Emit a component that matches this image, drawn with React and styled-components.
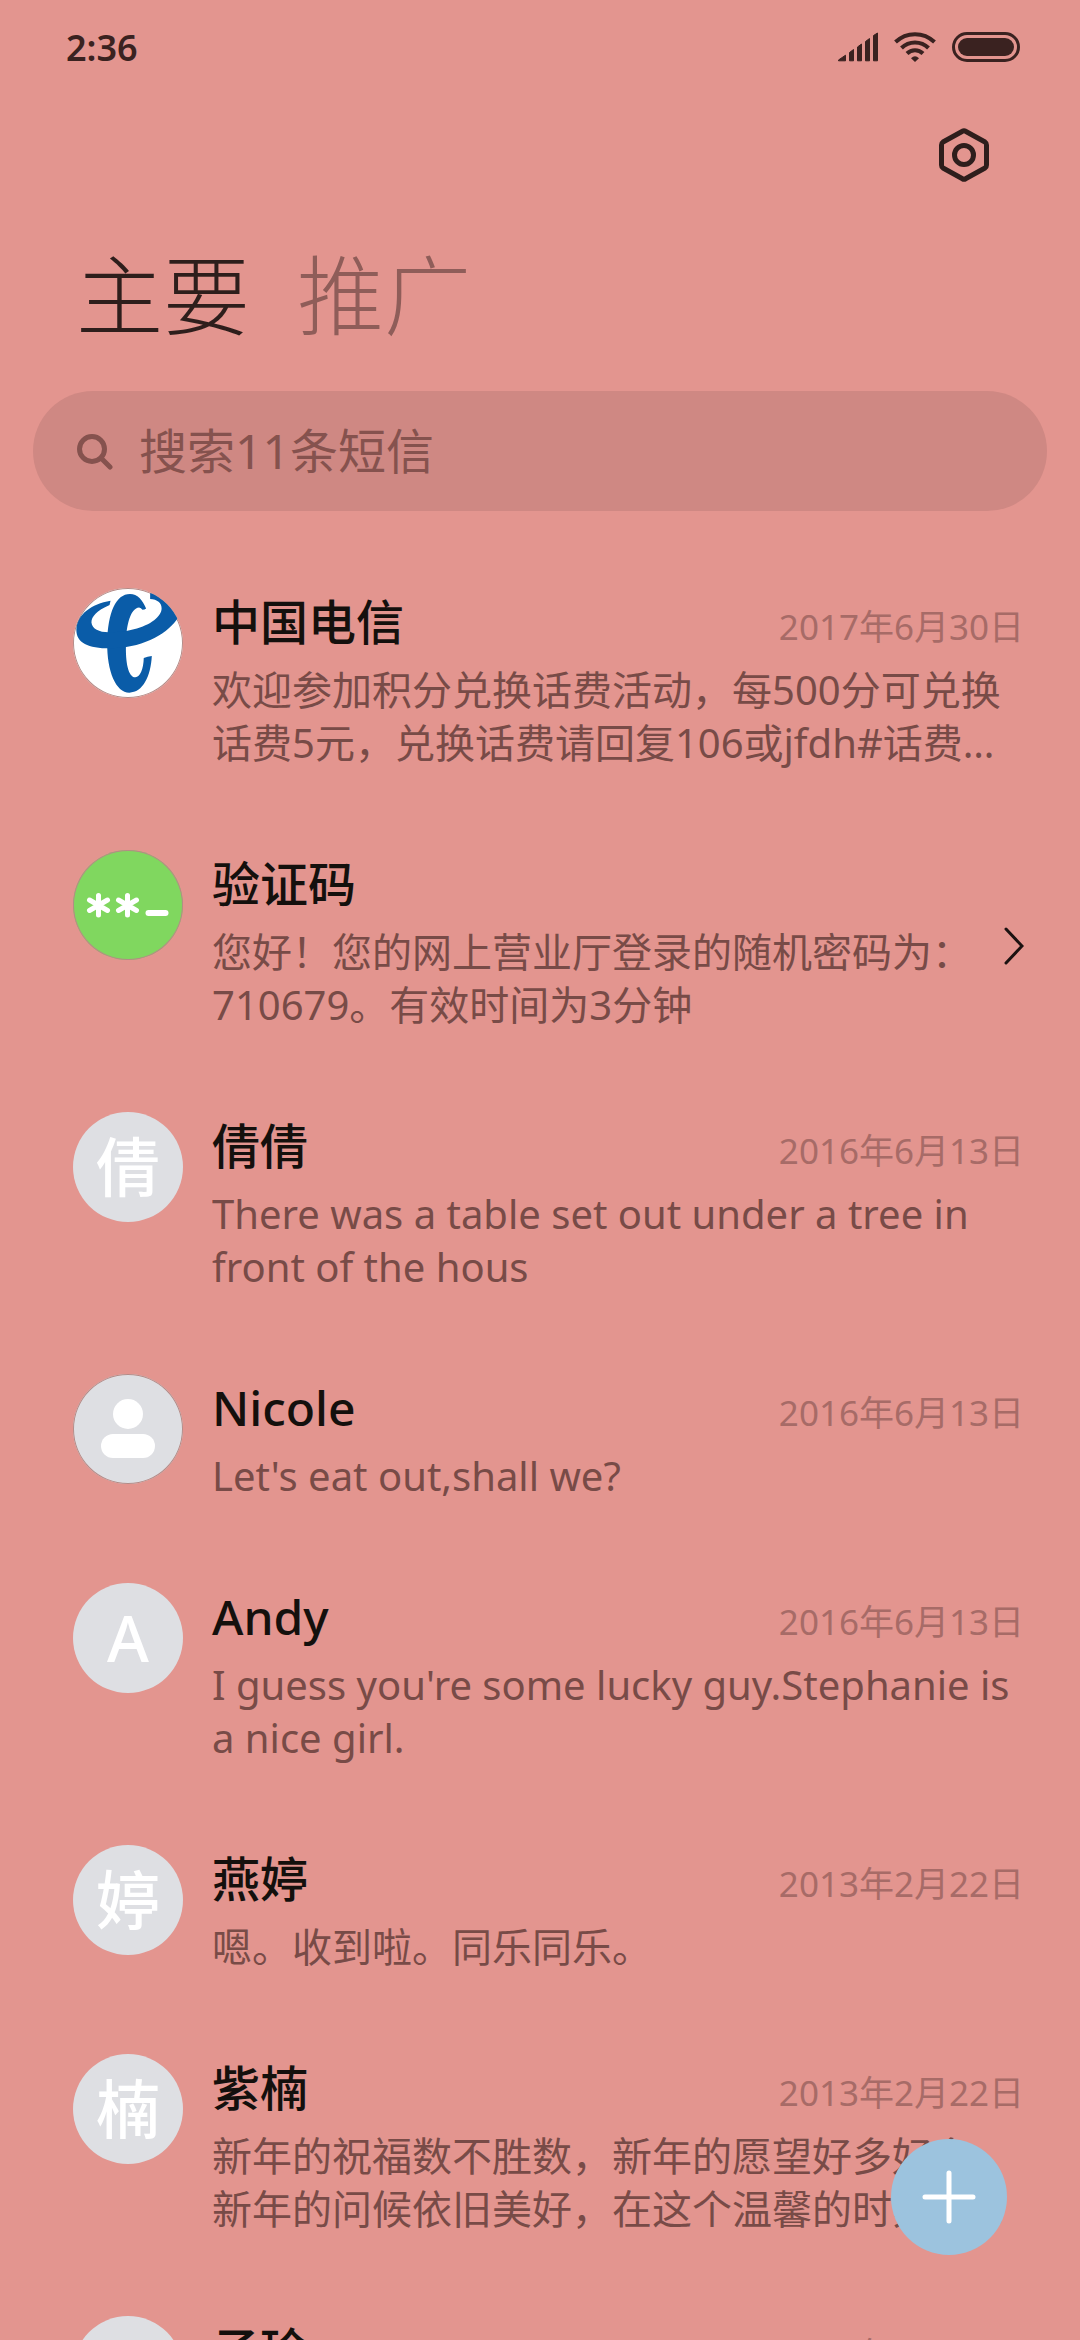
import styled, { createGlobalStyle } from "styled-components";

const GlobalStyle = createGlobalStyle`
  * {
    box-sizing: border-box;
  }

  body {
    margin: 0;
    background-color: #e3958f;
    font-family: "Noto Sans", "Noto Sans CJK SC", sans-serif;
    color: #14100d;
  }

  button,
  input {
    font: inherit;
    color: inherit;
    border: none;
    padding: 0;
    background: none;
  }
`;

const Screen = styled.div`
  display: flex;
  flex-direction: column;
  height: 100vh;
  overflow: hidden;
`;

const StatusBar = styled.div`
  display: flex;
  align-items: center;
  justify-content: space-between;
  height: 94px;
  padding: 0 60px 0 66px;
  color: #3a2220;
`;

const Clock = styled.span`
  font-size: 36px;
  font-weight: 600;
`;

const StatusIcons = styled.div`
  display: flex;
  align-items: center;
  gap: 16px;
`;

const Toolbar = styled.div`
  display: flex;
  justify-content: flex-end;
  padding: 30px 87px 0;
`;

const IconButton = styled.button`
  display: flex;
  padding: 4px;
`;

const Tabs = styled.nav`
  display: flex;
  gap: 47px;
  padding: 49px 76px 36px;
`;

const Tab = styled.button`
  font-size: 87px;
  font-weight: 300;
  line-height: 120px;
  color: ${(props) => (props.$active ? "#2e1e1c" : "#8f5d59")};
`;

const SearchBox = styled.label`
  display: flex;
  align-items: center;
  flex-shrink: 0;
  gap: 26px;
  height: 120px;
  margin: 0 33px;
  padding: 0 42px;
  border-radius: 60px;
  background-color: #cf8883;
  color: #85524e;
`;

const SearchInput = styled.input`
  flex: 1;
  min-width: 0;
  font-size: 48px;
  line-height: 72px;
  outline: none;

  &::placeholder {
    color: #85524e;
    opacity: 1;
  }
`;

const List = styled.ul`
  display: flex;
  flex-direction: column;
  flex: 1;
  gap: 81px;
  min-height: 0;
  margin: 0;
  padding: 77px 56px 0 73px;
  overflow-y: auto;
  list-style: none;
  scrollbar-width: none;
`;

const Row = styled.li`
  display: flex;
  align-items: flex-start;
  gap: 29px;
`;

const Avatar = styled.div`
  display: flex;
  align-items: center;
  justify-content: center;
  flex-shrink: 0;
  width: 110px;
  height: 110px;
  border-radius: 50%;
  overflow: hidden;
  background-color: ${(props) => props.$color || "#dedfe3"};
  box-shadow: ${(props) => (props.$ring ? "inset 0 0 0 1px #b58a86" : "none")};
  color: #ffffff;
  font-size: 64px;
  font-weight: 500;
  line-height: 110px;
`;

const Content = styled.div`
  flex: 1;
  min-width: 0;
`;

const Heading = styled.div`
  display: flex;
  align-items: baseline;
  justify-content: space-between;
  margin-bottom: 7px;
`;

const Name = styled.h2`
  margin: 0;
  font-size: 48px;
  font-weight: 500;
  line-height: 68px;
`;

const DateText = styled.time`
  font-size: 35px;
  line-height: 53px;
  color: #a76b67;
`;

const Preview = styled.p`
  display: -webkit-box;
  margin: 0;
  overflow: hidden;
  font-size: 40px;
  line-height: 53px;
  color: #784b47;
  -webkit-box-orient: vertical;
  -webkit-line-clamp: 2;
`;

const Arrow = styled.div`
  display: flex;
  padding-top: 77px;
`;

const ComposeButton = styled.button`
  position: fixed;
  right: 73px;
  bottom: 85px;
  display: flex;
  align-items: center;
  justify-content: center;
  width: 116px;
  height: 116px;
  border-radius: 50%;
  background-color: #9cc3de;
`;

const SignalIcon = () => (
  <svg width="40" height="30" viewBox="0 0 40 30" fill="currentColor" stroke="currentColor" strokeLinejoin="round">
    <path d="M.5 28L7.500 23.200V28.800H.5z M11.500 20.500L15.500 17.500V28.800H11.500z M19.500 15L23.500 12V28.800H19.500z M27.500 9.500L31.500 6.500V28.800H27.500z M35.500 3.500L39.500 1V28.800H35.500z" />
  </svg>
);

const WifiIcon = () => (
  <svg width="42" height="30" viewBox="0 0 42 30" fill="none" stroke="currentColor" strokeWidth="4">
    <path d="M1.500 10C12.500-.5 29.500-.5 40.500 10" />
    <path d="M7.500 16C15 8.500 27 8.500 34.500 16" />
    <path d="M13 21.500C17.500 17 24.500 17 29 21.500" />
    <path d="M17 26.200Q21 22.500 25 26.200L21 30z" fill="currentColor" stroke="none" />
  </svg>
);

const BatteryIcon = () => (
  <svg width="68" height="30" viewBox="0 0 68 30">
    <rect x="1.500" y="1.500" width="65" height="27" rx="13.500" fill="none" stroke="currentColor" strokeWidth="3" />
    <rect x="6" y="6" width="56" height="18" rx="9" fill="currentColor" />
  </svg>
);

const SettingsIcon = () => (
  <svg width="50" height="54" viewBox="0 0 50 54" fill="none" stroke="#2e1e1c" strokeWidth="5" strokeLinejoin="round">
    <path d="M23.500 3.200Q25 2.200 26.500 3.200L46 14Q47.500 15 47.500 17V37Q47.500 39 46 40L26.500 50.800Q25 51.800 23.500 50.800L4 40Q2.500 39 2.500 37V17Q2.500 15 4 14z" />
    <circle cx="25" cy="27" r="9.500" />
  </svg>
);

const SearchIcon = () => (
  <svg width="38" height="38" viewBox="0 0 38 38" fill="none" stroke="currentColor" strokeWidth="5">
    <circle cx="17" cy="17" r="12.500" />
    <path d="M26 26L35 35" strokeLinecap="round" />
  </svg>
);

const TelecomLogo = () => (
  <svg width="110" height="110" viewBox="40 42 328 328" fill="#0a5ca8">
    <path d="M247 107Q254 107 258 103C248 78 232 60 210 60C168 60 144 115 142 205C141 290 168 354 208 354C248 354 272 305 275 245Q262 246 251 251C250 285 240 308 226 308C205 308 196 265 198 205C199 150 212 102 237 100Q243 101 247 107z" />
    <path d="M152 80L149 93C110 110 95 128 95 145C97 165 120 175 150 174C180 173 195 171 212 167C265 156 300 132 304 106C306 88 293 76 270 75V58L310 55L370 110L349 137C315 185 240 222 150 222C85 222 50 205 50 167C52 120 95 90 152 80z" />
  </svg>
);

const CodeLogo = () => (
  <svg width="110" height="110" viewBox="0 0 110 110" fill="none" stroke="#ffffff" strokeWidth="5" strokeLinecap="round">
    <path d="M25.500 45.500V65M16.500 50L34.500 60.500M34.500 50L16.500 60.500" />
    <path d="M54.500 45.500V65M45.500 50L63.500 60.500M63.500 50L45.500 60.500" />
    <path d="M75.500 63H92.500" strokeWidth="6" />
  </svg>
);

const PersonLogo = () => (
  <svg width="110" height="110" viewBox="0 0 110 110" fill="#ffffff">
    <circle cx="55" cy="40" r="15" />
    <rect x="28" y="60" width="54" height="24" rx="12" />
  </svg>
);

const ChevronIcon = () => (
  <svg width="20" height="38" viewBox="0 0 20 38" fill="none" stroke="#1c1211" strokeWidth="3" strokeLinecap="round">
    <path d="M2 2L18 19L2 36" />
  </svg>
);

const PlusIcon = () => (
  <svg width="54" height="54" viewBox="0 0 54 54" stroke="#ffffff" strokeWidth="5" strokeLinecap="round">
    <path d="M27 3V51M3 27H51" />
  </svg>
);

const messages = [
  {
    name: "中国电信",
    date: "2017年6月30日",
    text: "欢迎参加积分兑换话费活动，每500分可兑换话费5元，兑换话费请回复106或jfdh#话费…",
    logo: <TelecomLogo />,
    color: "#ffffff",
  },
  {
    name: "验证码",
    text: "您好！您的网上营业厅登录的随机密码为：710679。有效时间为3分钟",
    logo: <CodeLogo />,
    color: "#80d75f",
    group: true,
  },
  {
    name: "倩倩",
    date: "2016年6月13日",
    text: "There was a table set out under a tree in front of the hous",
    letter: "倩",
  },
  {
    name: "Nicole",
    date: "2016年6月13日",
    text: "Let's eat out,shall we?",
    logo: <PersonLogo />,
  },
  {
    name: "Andy",
    date: "2016年6月13日",
    text: "I guess you're some lucky guy.Stephanie is a nice girl.",
    letter: "A",
  },
  {
    name: "燕婷",
    date: "2013年2月22日",
    text: "嗯。收到啦。同乐同乐。",
    letter: "婷",
  },
  {
    name: "紫楠",
    date: "2013年2月22日",
    text: "新年的祝福数不胜数，新年的愿望好多好多，新年的问候依旧美好，在这个温馨的时刻，…",
    letter: "楠",
  },
  {
    name: "子珍",
    date: "2013年2月22日",
    text: "新年快乐！",
    letter: "珍",
  },
];

const Message = ({ message }) => {
  return (
    <Row>
      <Avatar $color={message.color} $ring={Boolean(message.logo)}>
        {message.logo || message.letter}
      </Avatar>
      <Content>
        <Heading>
          <Name>{message.name}</Name>
          {message.date && <DateText>{message.date}</DateText>}
        </Heading>
        <Preview>{message.text}</Preview>
      </Content>
      {message.group && (
        <Arrow>
          <ChevronIcon />
        </Arrow>
      )}
    </Row>
  );
};

const App = () => {
  return (
    <Screen>
      <GlobalStyle />
      <StatusBar>
        <Clock>2:36</Clock>
        <StatusIcons>
          <SignalIcon />
          <WifiIcon />
          <BatteryIcon />
        </StatusIcons>
      </StatusBar>
      <Toolbar>
        <IconButton aria-label="设置">
          <SettingsIcon />
        </IconButton>
      </Toolbar>
      <Tabs>
        <Tab $active>主要</Tab>
        <Tab>推广</Tab>
      </Tabs>
      <SearchBox>
        <SearchIcon />
        <SearchInput type="text" placeholder="搜索11条短信" aria-label="搜索短信" />
      </SearchBox>
      <List>
        {messages.map((message) => (
          <Message key={message.name} message={message} />
        ))}
      </List>
      <ComposeButton aria-label="新建短信">
        <PlusIcon />
      </ComposeButton>
    </Screen>
  );
};

export default App;
